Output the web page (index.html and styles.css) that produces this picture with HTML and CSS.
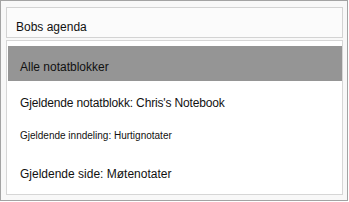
FILE: index.html
```html
<!DOCTYPE html>
<html lang="nb">
<head>
    <meta charset="UTF-8">
    <meta name="viewport" content="width=device-width, initial-scale=1.0">
    <title>Søk</title>
    <link rel="stylesheet" href="styles.css">
</head>
<body>
    <div class="frame">
        <div class="search-box">Bobs agenda</div>
        <div class="scope-list">
            <div class="scope-item active">Alle notatblokker</div>
            <div class="scope-item notebook">Gjeldende notatblokk: Chris's Notebook</div>
            <div class="scope-item small">Gjeldende inndeling: Hurtignotater</div>
            <div class="scope-item last">Gjeldende side: Møtenotater</div>
        </div>
    </div>
</body>
</html>
```

FILE: styles.css
```css
body {
    margin: 0;
    padding: 0;
    background: #ffffff;
    font-family: "Liberation Sans", Arial, sans-serif;
    color: #111;
}
.frame {
    box-sizing: border-box;
    width: 348px;
    height: 201px;
    border: 1px solid #a3a3a3;
    background: #f8f8f8;
    padding: 6px 4px 5px 5px;
}
.search-box {
    box-sizing: border-box;
    height: 31px;
    border: 1px solid #d3d3d3;
    background: #fbfbfb;
    padding: 12px 9px 0 9px;
    font-size: 12px;
    line-height: 14px;
    margin-bottom: 2px;
}
.scope-list {
    box-sizing: border-box;
    height: 155px;
    border: 1px solid #d6d6d6;
    background: #ffffff;
    padding: 5px 0 0 1px;
}
.scope-item {
    font-size: 12px;
    line-height: 14px;
    padding: 15px 12px 0 12px;
    white-space: nowrap;
}
.scope-item.active {
    background: #959595;
    padding: 14px 12px 7px 12px;
}
.scope-item.notebook {
    letter-spacing: -0.15px;
}
.scope-item.small {
    font-size: 10px;
    line-height: 12px;
    padding-top: 20px;
}
.scope-item.last {
    padding-top: 25px;
}
```
